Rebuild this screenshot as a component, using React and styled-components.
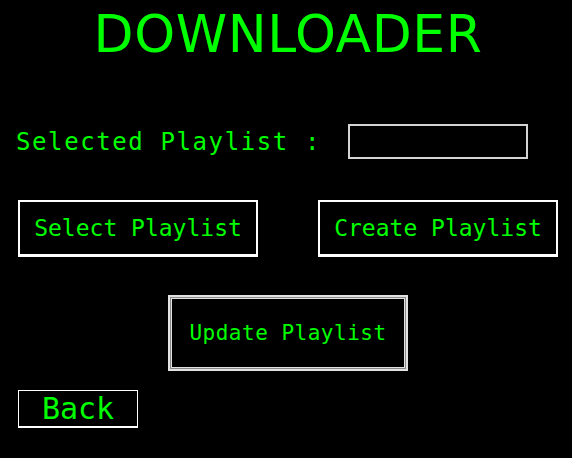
import React from "react";
import styled, { createGlobalStyle } from "styled-components";

const Global = createGlobalStyle`
  html, body { margin: 0; padding: 0; background: #000; }
  body { width: 572px; height: 458px; overflow: hidden; }
`;

const Page = styled.div`
  width: 572px;
  height: 458px;
  background: #000;
  display: flex;
  flex-direction: column;
  box-sizing: border-box;
  padding: 4px 14px 0 18px;
  font-family: "DejaVu Sans Mono", "Liberation Mono", monospace;
  color: #00ff00;
`;

const Title = styled.h1`
  margin: 0;
  font-family: "DejaVu Sans", "Liberation Sans", sans-serif;
  font-weight: normal;
  font-size: 52px;
  line-height: 60px;
  text-align: center;
  color: #00ff00;
  letter-spacing: 0.6px;
`;

const FieldRow = styled.div`
  display: flex;
  align-items: center;
  margin-top: 60px;
  height: 35px;
`;

const Label = styled.span`
  font-size: 24px;
  letter-spacing: 1.6px;
  margin-left: -2px;
  width: 332px;
  white-space: pre;
`;

const Field = styled.div`
  width: 180px;
  height: 35px;
  box-sizing: border-box;
  border: 2px solid #d4d4d4;
  background: #000;
`;

const ButtonRow = styled.div`
  display: flex;
  gap: 60px;
  margin-top: 41px;
`;

const Button = styled.button`
  box-sizing: border-box;
  width: ${(p) => p.$w}px;
  height: ${(p) => p.$h}px;
  background: #000;
  color: #00ff00;
  font-family: "DejaVu Sans Mono", "Liberation Mono", monospace;
  font-size: ${(p) => p.$fs}px;
  letter-spacing: ${(p) => p.$ls || 0}px;
  padding: 0;
  border-style: solid;
  border-color: #fff;
  border-width: 2px 2px 3px 2px;
  cursor: pointer;
`;

const UpdateButton = styled(Button)`
  align-self: center;
  margin-top: 38px;
  border: 2px solid #e2e2e2;
  box-shadow: inset 0 0 0 1px #8a8a8a, inset 0 0 0 2px #e2e2e2;
`;

const BackButton = styled(Button)`
  margin-top: 19px;
  border-width: 1px 1px 2px 1px;
  line-height: 1;
`;

export default function App() {
  return (
    <>
      <Global />
      <Page>
        <Title>DOWNLOADER</Title>
        <FieldRow>
          <Label>Selected Playlist :</Label>
          <Field />
        </FieldRow>
        <ButtonRow>
          <Button $w={240} $h={57} $fs={23}>Select Playlist</Button>
          <Button $w={240} $h={57} $fs={23}>Create Playlist</Button>
        </ButtonRow>
        <UpdateButton $w={240} $h={76} $fs={21} $ls={0.5}>Update Playlist</UpdateButton>
        <BackButton $w={120} $h={38} $fs={30}>Back</BackButton>
      </Page>
    </>
  );
}
